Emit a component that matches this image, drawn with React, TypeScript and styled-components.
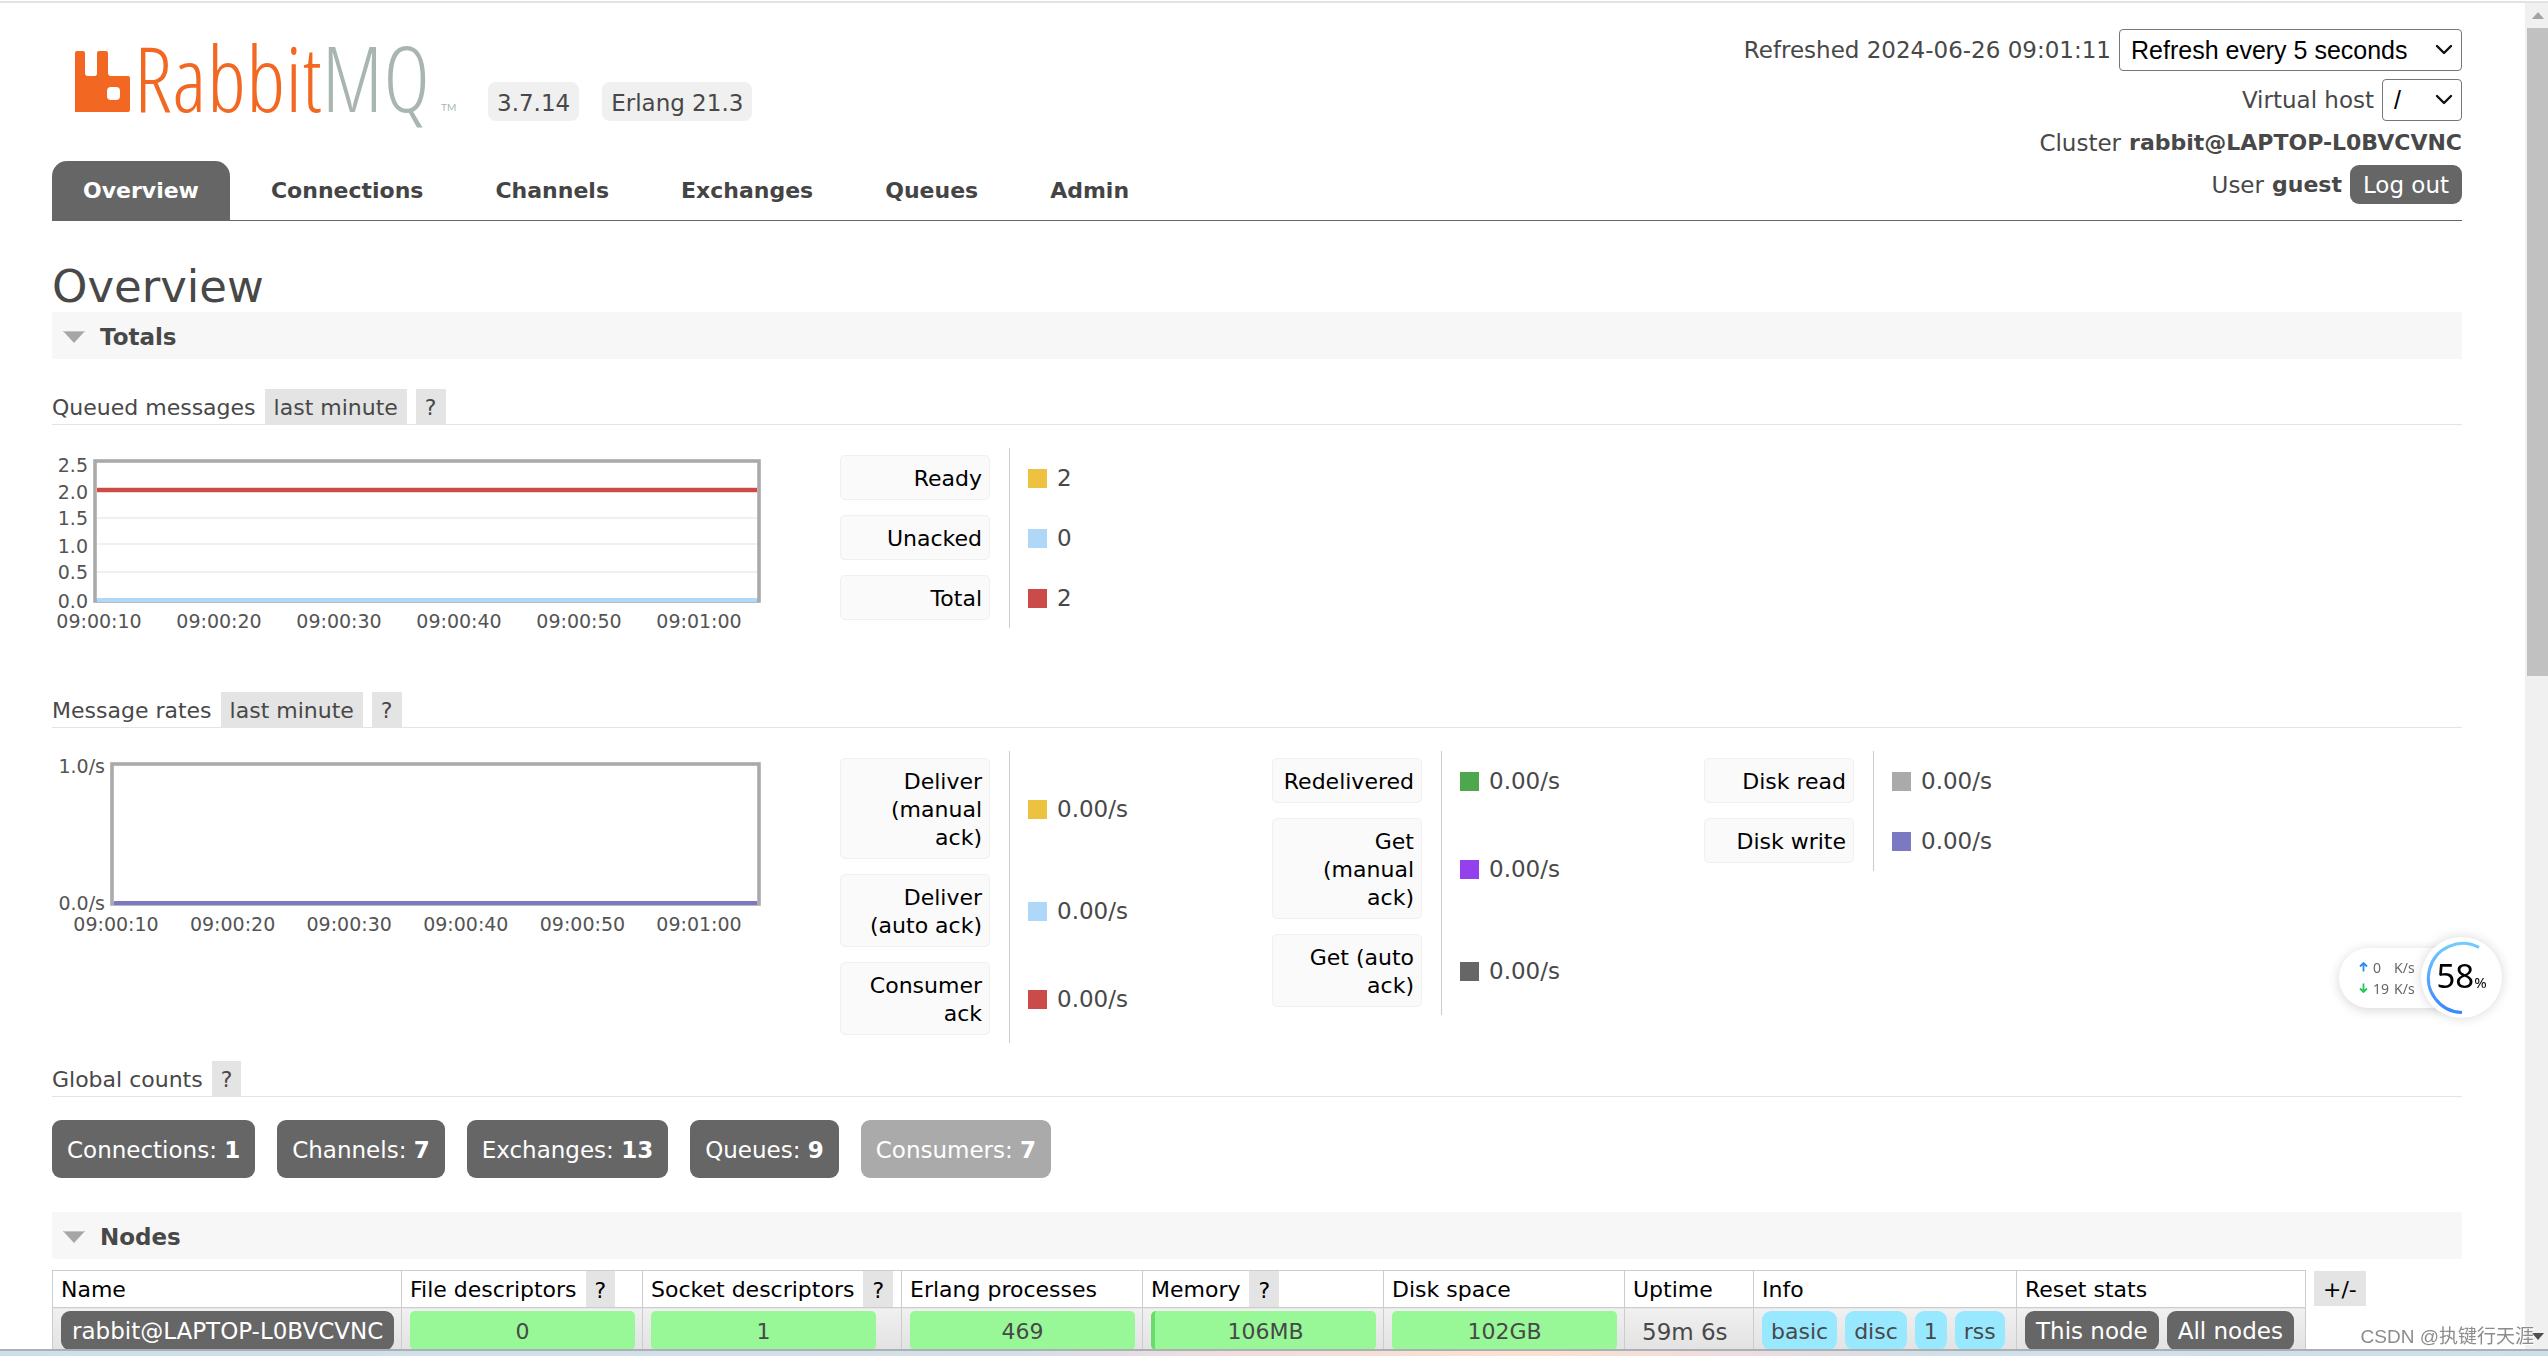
import React from "react";
import styled, { createGlobalStyle } from "styled-components";

const GlobalStyle = createGlobalStyle`
  *, *::before, *::after { box-sizing: border-box; }
  body {
    margin: 0;
    background: #fff;
    color: #484848;
    font-family: Verdana, "DejaVu Sans", sans-serif;
    font-size: 22px;
    line-height: 28px;
  }
  button, a { font: inherit; color: inherit; text-decoration: none; }
  button { border: 0; margin: 0; cursor: pointer; }
  h1, h2, h3, p { margin: 0; font-weight: normal; }
`;

const Window = styled.div`
  display: flex;
  flex-direction: column;
  height: 100vh;
  overflow: hidden;
  padding-top: 1px;
`;

const Viewport = styled.div`
  display: flex;
  flex: 1;
  min-height: 0;
  border-top: 2px solid #e1e4e4;
`;

const Page = styled.div`
  flex: 1;
  min-width: 0;
  overflow: hidden;
  padding: 0 63px 0 52px;
`;

const Scrollbar = styled.div`
  display: flex;
  flex-direction: column;
  justify-content: space-between;
  width: 23px;
  background: #f0f0f0;
`;

const ScrollArrow = styled.svg`
  display: block;
  width: 23px;
  height: 25px;
  flex: none;
`;

const ScrollTrack = styled.div`
  flex: 1;
  padding-left: 2px;
`;

const ScrollThumb = styled.div`
  height: 50%;
  background: #c1c1c1;
`;

const Wallpaper = styled.div`
  flex: none;
  height: 7px;
  border-top: 2px solid #a9b1b5;
  background: linear-gradient(90deg, #cde0e8 0%, #d5dfe8 40%, #eedde0 47%, #fbe3d0 60%, #eedde0 68%, #d2dfe8 76%, #cde0e8 100%);
`;

const Header = styled.header`
  display: flex;
  justify-content: space-between;
  padding-top: 26px;
  border-bottom: 1px solid #666;
`;

const Brand = styled.div`
  display: flex;
  flex-direction: column;
  justify-content: flex-end;
`;

const BrandRow = styled.div`
  display: flex;
  align-items: flex-end;
  gap: 23px;
  padding: 0 0 40px 23px;
`;

const Logo = styled.svg`
  display: block;
  width: 390px;
  height: 70px;
  overflow: visible;
`;

const Tag = styled.span`
  padding: 7px 9px 4px;
  border-radius: 8px;
  background: #f0f0f0;
  font-size: 23px;
`;

const Tabs = styled.nav`
  display: flex;
  gap: 10px;
`;

const Tab = styled.a<{ $active?: boolean }>`
  padding: 16px 31px 15px;
  border-radius: 15px 15px 0 0;
  font-weight: bold;
  background: ${(p) => (p.$active ? "#666" : "transparent")};
  color: ${(p) => (p.$active ? "#fff" : "#444")};
`;

const Session = styled.div`
  display: flex;
  flex-direction: column;
  align-items: flex-end;
  gap: 8px;
  padding-bottom: 16px;
  font-size: 23px;
`;

const SessionRow = styled.div`
  display: flex;
  align-items: center;
  gap: 8px;

  > b {
    font-size: 22px;
  }
`;

const SelectFrame = styled.span`
  display: inline-grid;
  align-items: center;

  > * {
    grid-area: 1 / 1;
  }

  > svg {
    justify-self: end;
    margin-right: 9px;
    width: 18px;
    height: 12px;
    pointer-events: none;
  }
`;

const Select = styled.select<{ $width: number }>`
  appearance: none;
  width: ${(p) => p.$width}px;
  height: 42px;
  padding: 0 11px;
  border: 1px solid #767676;
  border-radius: 4px;
  background: #fff;
  color: #000;
  font: 25px Arial, "Liberation Sans", sans-serif;
`;

const Pill = styled.button<{ $compact?: boolean }>`
  padding: 6px ${(p) => (p.$compact ? 11 : 13)}px 5px;
  border-radius: 9px;
  background: #666;
  color: #fff;
  font-size: 23px;
  white-space: nowrap;
`;

const Title = styled.h1`
  margin-top: 40px;
  font-size: 45px;
  line-height: 51px;
`;

const SectionBar = styled.h2`
  display: flex;
  align-items: center;
  gap: 15px;
  padding: 11px 11px 8px;
  background: #f7f7f7;
  font-size: 23px;
  font-weight: bold;

  > svg {
    width: 22px;
    height: 12px;
  }
`;

const SubHeading = styled.h3`
  display: flex;
  gap: 9px;
  border-bottom: 1px solid #e4e4e4;
  font-size: 22px;

  > span {
    padding: 5px 0 2px;
  }
`;

const Chip = styled.button`
  padding: 5px 9px 2px;
  background: #e4e4e4;
`;

const Totals = styled.section`
  padding-top: 30px;
`;

const ChartRow = styled.div`
  display: flex;
  align-items: flex-start;
  padding: 23px 0 18px;
`;

const ChartBox = styled.svg`
  display: block;
  flex: none;
  width: 728px;
  height: 226px;
  margin-right: 60px;
`;

const LegendGroup = styled.dl`
  margin: 0;
  width: 432px;
`;

const LegendRow = styled.div`
  display: flex;
  gap: 19px;
`;

const LegendName = styled.dt`
  width: 150px;
  margin: 7px 0 8px;
  padding: 9px 7px 6px;
  border: 1px solid #f0f0f0;
  border-radius: 5px;
  background: #fafafa;
  color: #000;
  text-align: right;
`;

const LegendValue = styled.dd`
  display: flex;
  align-items: center;
  gap: 10px;
  margin: 0;
  padding-left: 18px;
  border-left: 1px solid #ccc;
  font-size: 23px;
`;

const Swatch = styled.span<{ $color: string }>`
  width: 19px;
  height: 19px;
  background: ${(p) => p.$color};
`;

const Counts = styled.div`
  display: flex;
  gap: 22px;
  padding: 23px 0 34px;
`;

const Count = styled.button`
  padding: 16px 15px 14px;
  border-radius: 9px;
  background: #666;
  color: #fff;
  font-size: 23px;

  &:disabled {
    background: #aaa;
  }
`;

const TableRow = styled.div`
  display: flex;
  align-items: flex-start;
  gap: 8px;
  padding-top: 11px;
`;

const NodeTable = styled.table`
  border-collapse: collapse;
  table-layout: fixed;
  width: 2253px;

  th, td {
    border: 1px solid #ccc;
    white-space: nowrap;
    text-align: left;
    vertical-align: top;
  }

  th {
    padding: 0 8px;
    color: #000;
    font-weight: normal;
  }

  td {
    padding: 3px 7px 7px 8px;
    background: linear-gradient(#f0f0f0, #e0e0e0);
  }
`;

const HeadCell = styled.div`
  display: flex;
  gap: 9px;

  > span {
    padding: 5px 0 3px;
  }
`;

const CellRow = styled.div`
  display: flex;
  gap: 8px;
`;

const Bar = styled.div<{ $used?: boolean }>`
  width: 225px;
  padding: 7px 0 4px;
  border-radius: 5px;
  border-left: ${(p) => (p.$used ? "4px solid #66dd66" : "0")};
  background: #98f898;
  text-align: center;
`;

const Uptime = styled.div`
  padding: 7px 9px 4px;
  font-size: 23px;
`;

const InfoTag = styled.span`
  padding: 7px 9px 4px;
  border-radius: 9px;
  background: #98e9ff;
`;

const ColumnsChip = styled(Chip)`
  margin-top: 1px;
  color: #000;
`;

const Monitor = styled.aside`
  position: fixed;
  right: 46px;
  top: 937px;
  display: flex;
  align-items: center;
  color: #666;
  font: 14px/21px "Microsoft YaHei", "Noto Sans", sans-serif;
`;

const Speeds = styled.div`
  display: grid;
  grid-template-columns: 9px auto auto;
  column-gap: 5px;
  align-items: center;
  width: 123px;
  height: 60px;
  margin-right: -41px;
  padding: 9px 48px 9px 20px;
  border-radius: 30px;
  background: #fff;
  box-shadow: 0 2px 12px rgba(0, 0, 0, 0.16);
  white-space: nowrap;

  > svg {
    width: 9px;
    height: 10px;
  }
`;

const Gauge = styled.div`
  display: grid;
  place-items: center;
  width: 81px;
  height: 81px;
  border-radius: 50%;
  background: #fff;
  box-shadow: 0 0 12px rgba(0, 0, 0, 0.16);

  > * {
    grid-area: 1 / 1;
  }
`;

const GaugeText = styled.div`
  display: flex;
  align-items: baseline;
  padding-top: 3px;
  color: #000;
  font-size: 33px;
  line-height: 40px;

  > small {
    font-size: 15px;
  }
`;

const Watermark = styled.div`
  position: fixed;
  right: 14px;
  bottom: 6px;
  color: #8c8c8c;
  font: 19px/26px "Liberation Sans", "Noto Sans CJK SC", sans-serif;
  text-shadow: 1px 1px 0 #fff;
`;

const Chevron = () => (
  <svg viewBox="0 0 18 12" aria-hidden="true">
    <path d="M2 2l7 7 7-7" fill="none" stroke="#111" strokeWidth="2.4" strokeLinecap="round" strokeLinejoin="round" />
  </svg>
);

const Triangle = () => (
  <svg viewBox="0 0 22 12" aria-hidden="true">
    <path d="M0 0h22L11 12z" fill="#a6a6a6" />
    <path d="M0 0h22v1H0z" fill="#c4c4c4" />
  </svg>
);

type Tick = { label: string; y: number };
type Line = { color: string; y: number; width: number };

const FRAME_RIGHT = 709;
const FRAME_TOP = 11;
const FRAME_BOTTOM = 155;

function Chart(props: { left: number; yTicks: Tick[]; grid: number[]; xStart: number; xStep: number; lines: Line[]; title: string }) {
  const { left, yTicks, grid, xStart, xStep, lines, title } = props;
  const times = ["09:00:10", "09:00:20", "09:00:30", "09:00:40", "09:00:50", "09:01:00"];
  return (
    <ChartBox viewBox="0 0 728 226" role="img" aria-label={title} fontSize="19" fill="#545454">
      <rect x={left + 2} y={FRAME_TOP + 2} width={FRAME_RIGHT - left - 4} height={FRAME_BOTTOM - FRAME_TOP - 4} fill="none" stroke="#aaa" strokeWidth="3.6" />
      {grid.map((y) => (
        <path key={y} d={`M${left + 4} ${y}H${FRAME_RIGHT - 4}`} stroke="#f0f0f0" strokeWidth="2" />
      ))}
      {lines.map((l, i) => (
        <path key={i} d={`M${left + 4} ${l.y}H${FRAME_RIGHT - 4}`} stroke={l.color} strokeWidth={l.width} />
      ))}
      {yTicks.map((t) => (
        <text key={t.label} x={left - 5} y={t.y + 7} textAnchor="end">{t.label}</text>
      ))}
      {times.map((t, i) => (
        <text key={t} x={xStart + i * xStep} y={180} textAnchor="middle">{t}</text>
      ))}
    </ChartBox>
  );
}

type Entry = [name: string, color: string, value: string];

function Legend({ entries }: { entries: Entry[] }) {
  return (
    <LegendGroup>
      {entries.map(([name, color, value]) => (
        <LegendRow key={name}>
          <LegendName>{name}</LegendName>
          <LegendValue>
            <Swatch $color={color} />
            {value}
          </LegendValue>
        </LegendRow>
      ))}
    </LegendGroup>
  );
}

function Heading({ text, range }: { text: string; range?: boolean }) {
  return (
    <SubHeading>
      <span>{text}</span>
      {range && <Chip>last minute</Chip>}
      <Chip>?</Chip>
    </SubHeading>
  );
}

const tabs = ["Overview", "Connections", "Channels", "Exchanges", "Queues", "Admin"];

const queued: Entry[] = [
  ["Ready", "#edc240", "2"],
  ["Unacked", "#afd8f8", "0"],
  ["Total", "#cb4b4b", "2"],
];

const rates: Entry[][] = [
  [
    ["Deliver (manual ack)", "#edc240", "0.00/s"],
    ["Deliver (auto ack)", "#afd8f8", "0.00/s"],
    ["Consumer ack", "#cb4b4b", "0.00/s"],
  ],
  [
    ["Redelivered", "#4da74d", "0.00/s"],
    ["Get (manual ack)", "#9440ed", "0.00/s"],
    ["Get (auto ack)", "#666666", "0.00/s"],
  ],
  [
    ["Disk read", "#aaaaaa", "0.00/s"],
    ["Disk write", "#7c79c3", "0.00/s"],
  ],
];

const counts: [string, number][] = [
  ["Connections", 1],
  ["Channels", 7],
  ["Exchanges", 13],
  ["Queues", 9],
  ["Consumers", 7],
];

const columns: { name: string; width: number; help?: boolean }[] = [
  { name: "Name", width: 349 },
  { name: "File descriptors", width: 241, help: true },
  { name: "Socket descriptors", width: 259, help: true },
  { name: "Erlang processes", width: 241 },
  { name: "Memory", width: 241, help: true },
  { name: "Disk space", width: 241 },
  { name: "Uptime", width: 129 },
  { name: "Info", width: 263 },
  { name: "Reset stats", width: 289 },
];

export default function App() {
  return (
    <>
      <GlobalStyle />
      <Window>
        <Viewport>
          <Page>
            <Header>
              <Brand>
                <BrandRow>
                  <Logo viewBox="0 0 390 70" role="img" aria-label="RabbitMQ">
                    <path
                      d="M2 0H8Q10 0 10 2V22Q10 25 13 25H20Q22 25 22 22V2Q22 0 24 0H31Q33 0 33 2V22Q33 25 36 25H53Q55 25 55 27V59Q55 61 53 61H0V2Q0 0 2 0ZM36 36Q32 36 32 40V45Q32 49 36 49H41Q45 49 45 45V40Q45 36 41 36Z"
                      fill="#f26822"
                      fillRule="evenodd"
                    />
                    <text x="59" y="61" fontSize="90" fontFamily="'Open Sans Condensed Light', 'Open Sans Light', Lato, sans-serif" fontWeight="300" fill="#f26822">
                      Rabbit<tspan fill="#a9b6af">MQ</tspan>
                    </text>
                    <text x="366" y="60" fontSize="10" fontFamily="Lato, sans-serif" fill="#a9b6af">TM</text>
                  </Logo>
                  <Tag>3.7.14</Tag>
                  <Tag>Erlang 21.3</Tag>
                </BrandRow>
                <Tabs>
                  {tabs.map((t, i) => (
                    <Tab key={t} href={`#/${t.toLowerCase()}`} $active={i === 0}>{t}</Tab>
                  ))}
                </Tabs>
              </Brand>
              <Session>
                <SessionRow>
                  <label htmlFor="refresh">Refreshed 2024-06-26 09:01:11</label>
                  <SelectFrame>
                    <Select id="refresh" $width={343}>
                      <option>Refresh every 5 seconds</option>
                    </Select>
                    <Chevron />
                  </SelectFrame>
                </SessionRow>
                <SessionRow>
                  <label htmlFor="vhost">Virtual host</label>
                  <SelectFrame>
                    <Select id="vhost" $width={80}>
                      <option>/</option>
                    </Select>
                    <Chevron />
                  </SelectFrame>
                </SessionRow>
                <SessionRow>
                  <span>Cluster</span>
                  <b>rabbit@LAPTOP-L0BVCVNC</b>
                </SessionRow>
                <SessionRow>
                  <span>User</span>
                  <b>guest</b>
                  <Pill>Log out</Pill>
                </SessionRow>
              </Session>
            </Header>

            <main>
              <Title>Overview</Title>
              <SectionBar><Triangle />Totals</SectionBar>
              <Totals>
                <Heading text="Queued messages" range />
                <ChartRow>
                  <Chart
                    title="Queued messages"
                    left={41}
                    yTicks={[
                      { label: "2.5", y: 17 },
                      { label: "2.0", y: 44 },
                      { label: "1.5", y: 70 },
                      { label: "1.0", y: 98 },
                      { label: "0.5", y: 124 },
                      { label: "0.0", y: 153 },
                    ]}
                    grid={[70, 96, 124]}
                    xStart={47}
                    xStep={120}
                    lines={[
                      { color: "#e8b48c", y: 42, width: 5 },
                      { color: "#cb4b4b", y: 42, width: 4 },
                      { color: "#afd8f8", y: 152, width: 4 },
                    ]}
                  />
                  <Legend entries={queued} />
                </ChartRow>
                <Heading text="Message rates" range />
                <ChartRow>
                  <Chart
                    title="Message rates"
                    left={58}
                    yTicks={[
                      { label: "1.0/s", y: 15 },
                      { label: "0.0/s", y: 152 },
                    ]}
                    grid={[]}
                    xStart={64}
                    xStep={116.6}
                    lines={[{ color: "#7c79c3", y: 152, width: 4 }]}
                  />
                  {rates.map((r, i) => (
                    <Legend key={i} entries={r} />
                  ))}
                </ChartRow>
                <Heading text="Global counts" />
                <Counts>
                  {counts.map(([name, n]) => (
                    <Count key={name} disabled={name === "Consumers"}>
                      {name}: <b>{n}</b>
                    </Count>
                  ))}
                </Counts>
              </Totals>
              <SectionBar><Triangle />Nodes</SectionBar>
              <TableRow>
                <NodeTable>
                  <colgroup>
                    {columns.map((c) => (
                      <col key={c.name} style={{ width: c.width }} />
                    ))}
                  </colgroup>
                  <thead>
                    <tr>
                      {columns.map((c) => (
                        <th key={c.name}>
                          <HeadCell>
                            <span>{c.name}</span>
                            {c.help && <Chip>?</Chip>}
                          </HeadCell>
                        </th>
                      ))}
                    </tr>
                  </thead>
                  <tbody>
                    <tr>
                      <td><CellRow><Pill $compact>rabbit@LAPTOP-L0BVCVNC</Pill></CellRow></td>
                      <td><Bar>0</Bar></td>
                      <td><Bar>1</Bar></td>
                      <td><Bar>469</Bar></td>
                      <td><Bar $used>106MB</Bar></td>
                      <td><Bar>102GB</Bar></td>
                      <td><Uptime>59m 6s</Uptime></td>
                      <td>
                        <CellRow>
                          {["basic", "disc", "1", "rss"].map((t) => (
                            <InfoTag key={t}>{t}</InfoTag>
                          ))}
                        </CellRow>
                      </td>
                      <td>
                        <CellRow>
                          <Pill $compact>This node</Pill>
                          <Pill $compact>All nodes</Pill>
                        </CellRow>
                      </td>
                    </tr>
                  </tbody>
                </NodeTable>
                <ColumnsChip>+/-</ColumnsChip>
              </TableRow>
            </main>
          </Page>
          <Scrollbar aria-hidden="true">
            <ScrollArrow viewBox="0 0 23 25"><path d="M7 16h12l-6-7z" fill="#a3a3a3" /></ScrollArrow>
            <ScrollTrack><ScrollThumb /></ScrollTrack>
            <ScrollArrow viewBox="0 0 23 25"><path d="M7 9h12l-6 7z" fill="#505050" /></ScrollArrow>
          </Scrollbar>
        </Viewport>
        <Wallpaper />
      </Window>

      <Monitor>
        <Speeds>
          <svg viewBox="0 0 9 10"><path d="M4.500 9.500V1M1 4.500L4.500 1 8 4.500" fill="none" stroke="#2b8cf5" strokeWidth="1.800" /></svg>
          <span>0</span>
          <span>K/s</span>
          <svg viewBox="0 0 9 10"><path d="M4.500 .500V9M1 5.500L4.500 9 8 5.500" fill="none" stroke="#25c45a" strokeWidth="1.800" /></svg>
          <span>19</span>
          <span>K/s</span>
        </Speeds>
        <Gauge>
          <svg width="81" height="81" viewBox="0 0 81 81" aria-hidden="true">
            <defs>
              <linearGradient id="arc" x1="0" y1="0" x2="0" y2="1">
                <stop offset="0" stopColor="#72caff" />
                <stop offset="1" stopColor="#3a86ff" />
              </linearGradient>
            </defs>
            <path d="M58 10.500A34.500 34.500 0 1 0 41 75.500" fill="none" stroke="url(#arc)" strokeWidth="3" />
          </svg>
          <GaugeText>58<small>%</small></GaugeText>
        </Gauge>
      </Monitor>
      <Watermark>CSDN @执键行天涯</Watermark>
    </>
  );
}
